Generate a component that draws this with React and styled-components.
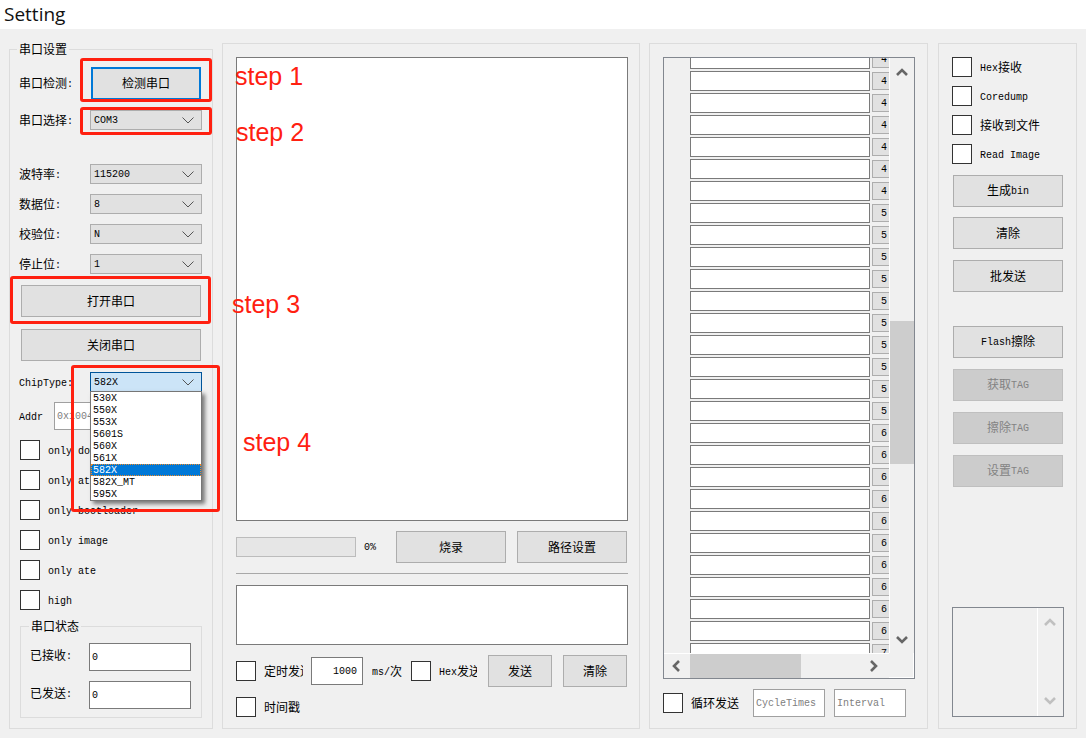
import React from 'react';
import styled, { createGlobalStyle } from 'styled-components';

const GlobalStyle = createGlobalStyle`
  html, body { margin: 0; padding: 0; background: #f0f0f0; overflow: hidden; }
  body {
    font-family: "Noto Sans CJK SC", "Liberation Sans", sans-serif;
    font-size: 12px;
    color: #000;
  }
  * { box-sizing: border-box; }
`;

const Window = styled.div`
  position: relative;
  width: 1086px;
  height: 738px;
  background: #f0f0f0;
  overflow: hidden;
`;

const TitleBar = styled.div`
  height: 29px;
  padding-left: 4px;
  background: #fff;
  font-family: "Open Sans", "Liberation Sans", sans-serif;
  font-size: 19px;
  line-height: 29px;
  color: #111;
`;

const Main = styled.div`
  display: flex;
  padding: 14px 0 0 9px;
`;

const Panel = styled.section`
  display: flex;
  flex-direction: column;
  align-items: flex-start;
  flex: none;
  width: ${(p) => p.$w}px;
  height: 686px;
  margin-right: ${(p) => p.$gap || 0}px;
  padding: 13px 0 0 13px;
  border: 1px solid #dcdcdc;
`;

const SerialGroup = styled.section`
  position: relative;
  display: flex;
  flex-direction: column;
  align-items: flex-start;
  flex: none;
  width: 204px;
  height: 680px;
  margin: 6px 9px 0 0;
  padding: 17px 0 0 10px;
  border: 1px solid #dcdcdc;
`;

const GroupTitle = styled.span`
  position: absolute;
  top: -9px;
  left: ${(p) => p.$left}px;
  padding: 0 2px 0 2px;
  background: #f0f0f0;
  line-height: 16px;
`;

const StatusGroup = styled.section`
  position: relative;
  width: 182px;
  height: 92px;
  margin-top: 16px;
  padding: 16px 0 0 10px;
  border: 1px solid #dcdcdc;
`;

const Latin = styled.span`
  font-family: "Liberation Mono", monospace;
  font-size: 10px;
  vertical-align: 1px;
`;

// SimSun look: ascii is narrow (6px a char), CJK is 12px
const T = ({ children }) =>
  String(children)
    .split(/([\x00-\x7f]+)/)
    .filter(Boolean)
    .map((s, i) => (/^[\x00-\x7f]/.test(s) ? <Latin key={i}>{s}</Latin> : s));

const Field = styled.div`
  display: flex;
  align-items: center;
  margin-top: ${(p) => p.$top || 0}px;
`;

const FieldLabel = styled.label`
  flex: none;
  width: ${(p) => (p.$w || 70) + 1}px;
  margin-left: -1px;
  padding-bottom: 2px;
  white-space: nowrap;
`;

const StatusLabel = styled(FieldLabel)`
  padding-bottom: 6px;
`;

const Button = styled.button`
  display: block;
  flex: none;
  width: ${(p) => p.$w || 110}px;
  height: 32px;
  margin: ${(p) => p.$top || 0}px 0 0 ${(p) => p.$left || 0}px;
  padding: 0;
  background: ${(p) => (p.disabled ? '#cccccc' : '#e1e1e1')};
  border: 1px solid ${(p) => (p.disabled ? '#bfbfbf' : '#adadad')};
  color: ${(p) => (p.disabled ? '#838383' : '#000')};
  font: inherit;
  line-height: 16px;
`;

const FocusButton = styled(Button)`
  height: 33px;
  margin-left: 1px;
  padding-bottom: 2px;
  border: 2px solid #0078d7;
`;

const ComboWrap = styled.div`
  position: relative;
  flex: none;
  width: 112px;
  height: 20px;
`;

const Combo = styled.div`
  display: flex;
  align-items: center;
  justify-content: space-between;
  height: 20px;
  padding: 0 7px 0 3px;
  background: ${(p) => (p.$open ? '#cce4f7' : '#e1e1e1')};
  border: 1px solid ${(p) => (p.$open ? '#005499' : '#adadad')};
  font-family: "Liberation Mono", monospace;
  font-size: 10px;
`;

const ComboList = styled.ul`
  position: absolute;
  top: 19px;
  left: 0;
  z-index: 2;
  width: 112px;
  margin: 0;
  padding: 0;
  list-style: none;
  background: #fff;
  border: 1px solid #767676;
  box-shadow: 3px 3px 4px rgba(0, 0, 0, 0.5);
  font-family: "Liberation Mono", monospace;
  font-size: 10px;
`;

const ComboItem = styled.li`
  height: 12px;
  padding-left: 2px;
  line-height: 14px;
  background: ${(p) => (p.$active ? '#0078d7' : 'transparent')};
  color: ${(p) => (p.$active ? '#fff' : '#000')};
  outline: ${(p) => (p.$active ? '1px dotted #f08a24' : 'none')};
  outline-offset: -1px;
`;

const Input = styled.div`
  flex: none;
  display: flex;
  align-items: center;
  justify-content: ${(p) => (p.$right ? 'flex-end' : 'flex-start')};
  width: ${(p) => p.$w}px;
  height: 28px;
  padding: 0 ${(p) => (p.$right ? 5 : 2)}px 0 2px;
  background: #fff;
  border: 1px solid ${(p) => (p.$hint ? '#a0a0a0' : '#7a7a7a')};
  color: ${(p) => (p.$hint ? '#808080' : '#000')};
  font-family: "Liberation Mono", monospace;
  font-size: 10px;
  white-space: nowrap;
  overflow: hidden;
`;

const Check = styled.span`
  flex: none;
  display: block;
  width: 20px;
  height: 20px;
  background: #fff;
  border: 1px solid #333;
`;

const CheckRow = styled.div`
  display: flex;
  align-items: center;
  gap: 8px;
  height: 20px;
  margin-top: ${(p) => p.$top ?? 10}px;
  white-space: nowrap;
`;

const CheckText = styled.span`
  padding-bottom: 2px;
`;

const ClipLabel = styled.span`
  flex: none;
  width: ${(p) => p.$w}px;
  padding-bottom: 2px;
  overflow: hidden;
  white-space: nowrap;
`;

const TextBox = styled.div`
  flex: none;
  width: 392px;
  height: ${(p) => p.$h}px;
  background: #fff;
  border: 1px solid #7a7a7a;
`;

const BurnRow = styled.div`
  display: flex;
  align-items: center;
  width: 392px;
  margin-top: 10px;
`;

const Progress = styled.div`
  width: 120px;
  height: 20px;
  background: #e6e6e6;
  border: 1px solid #bcbcbc;
`;

const Percent = styled.span`
  width: 40px;
  padding-left: 8px;
  font-family: "Liberation Mono", monospace;
  font-size: 10px;
`;

const Separator = styled.hr`
  flex: none;
  width: 392px;
  height: 1px;
  margin: 10px 0 11px;
  border: 0;
  background: #a8a8a8;
`;

const SendRow = styled.div`
  display: flex;
  align-items: center;
  height: 32px;
  margin-top: 10px;
`;

const Gap = styled.span`
  flex: none;
  width: ${(p) => p.$w}px;
`;

const ScrollBox = styled.div`
  display: grid;
  grid-template-columns: 225px 25px;
  grid-template-rows: 595px 25px;
  flex: none;
  width: 252px;
  height: 622px;
  border: 1px solid #82878f;
`;

const Viewport = styled.div`
  overflow: hidden;
  background: #f0f0f0;
`;

const RowStack = styled.div`
  display: flex;
  flex-direction: column;
  gap: 2px;
  margin-top: -9px;
  padding-left: 26px;
`;

const ListRow = styled.div`
  display: flex;
  align-items: center;
  gap: 2px;
  height: 20px;
`;

const RowInput = styled.div`
  flex: none;
  width: 180px;
  height: 20px;
  background: #fff;
  border: 1px solid #7a7a7a;
`;

const RowButton = styled.div`
  flex: none;
  width: 40px;
  height: 18px;
  padding-left: 8px;
  background: #e1e1e1;
  border: 1px solid #adadad;
  font-family: "Liberation Mono", monospace;
  font-size: 10px;
  line-height: 17px;
`;

const VBar = styled.div`
  display: flex;
  flex-direction: column;
  align-items: center;
  background: #f0f0f0;
  border-left: 1px solid #fff;
`;

const ArrowSlot = styled.div`
  flex: none;
  display: flex;
  align-items: center;
  justify-content: center;
  width: ${(p) => p.$w || 24}px;
  height: ${(p) => p.$h || 25}px;
  margin-top: ${(p) => (p.$end ? 'auto' : 0)};
  margin-left: ${(p) => (p.$push ? 'auto' : 0)};
`;

const VThumb = styled.div`
  flex: none;
  width: 24px;
  height: 143px;
  margin-top: 233px;
  background: #cdcdcd;
`;

const HBar = styled.div`
  display: flex;
  background: #f0f0f0;
  border-top: 1px solid #fff;
`;

const HThumb = styled.div`
  flex: none;
  width: 111px;
  height: 24px;
  background: #cdcdcd;
`;

const Corner = styled.div`
  background: #f0f0f0;
  border-right: 1px solid #fff;
  border-bottom: 1px solid #fff;
`;

const LoopRow = styled.div`
  display: flex;
  align-items: center;
  margin-top: 10px;
`;

const LogBox = styled.div`
  display: flex;
  justify-content: flex-end;
  flex: none;
  width: 112px;
  height: 110px;
  margin-top: auto;
  margin-bottom: 11px;
  border: 1px solid #82878f;
`;

const LogBar = styled.div`
  display: flex;
  flex-direction: column;
  width: 26px;
  border-left: 1px solid #fff;
`;

const Note = styled.div`
  position: absolute;
  z-index: 3;
  left: ${(p) => p.$x}px;
  top: ${(p) => p.$y}px;
  width: ${(p) => p.$w}px;
  height: ${(p) => p.$h}px;
  border: 3px solid #ff2010;
  border-radius: 3px;
`;

const Step = styled.span`
  position: absolute;
  z-index: 3;
  left: ${(p) => p.$x}px;
  top: ${(p) => p.$y}px;
  font-family: "Liberation Sans", Arial, sans-serif;
  font-size: 25px;
  line-height: 30px;
  color: #ff2010;
`;

const Chevron = ({ dir = 'down', color = '#666' }) => {
  const points = {
    up: '1,8 6,3 11,8',
    down: '1,3 6,8 11,3',
    left: '8,1 3,6 8,11',
    right: '3,1 8,6 3,11',
  }[dir];
  return (
    <svg width="12" height="12" viewBox="0 0 12 12">
      <polyline points={points} fill="none" stroke={color} strokeWidth="2.6" />
    </svg>
  );
};

const ComboArrow = () => (
  <svg width="12" height="7" viewBox="0 0 12 7">
    <polyline points="0.5,0.5 6,6 11.5,0.5" fill="none" stroke="#555" strokeWidth="1" />
  </svg>
);

const chipTypes = ['530X', '550X', '553X', '5601S', '560X', '561X', '582X', '582X_MT', '595X'];

const rowDigits = [
  ...Array(7).fill(4),
  ...Array(10).fill(5),
  ...Array(10).fill(6),
  7,
];

function SelectField({ label, value, top }) {
  return (
    <Field $top={top}>
      <FieldLabel><T>{label}</T></FieldLabel>
      <ComboWrap>
        <Combo>{value}<ComboArrow /></Combo>
      </ComboWrap>
    </Field>
  );
}

function CheckField({ label, top }) {
  return (
    <CheckRow $top={top}>
      <Check />
      <CheckText><T>{label}</T></CheckText>
    </CheckRow>
  );
}

function SerialPanel() {
  return (
    <SerialGroup>
      <GroupTitle $left={7}>串口设置</GroupTitle>
      <Field>
        <FieldLabel><T>串口检测:</T></FieldLabel>
        <FocusButton>检测串口</FocusButton>
      </Field>
      <SelectField label="串口选择:" value="COM3" top={10} />
      <SelectField label="波特率:" value="115200" top={34} />
      <SelectField label="数据位:" value="8" top={10} />
      <SelectField label="校验位:" value="N" top={10} />
      <SelectField label="停止位:" value="1" top={10} />
      <Button $w={180} $left={1} $top={11}>打开串口</Button>
      <Button $w={180} $left={1} $top={12}>关闭串口</Button>
      <Field $top={11}>
        <FieldLabel><T>ChipType:</T></FieldLabel>
        <ComboWrap>
          <Combo $open>582X<ComboArrow /></Combo>
          <ComboList>
            {chipTypes.map((c) => (
              <ComboItem key={c} $active={c === '582X'}>{c}</ComboItem>
            ))}
          </ComboList>
        </ComboWrap>
      </Field>
      <Field $top={10}>
        <FieldLabel $w={34}><T>Addr</T></FieldLabel>
        <Input $w={148} $hint>0x1004</Input>
      </Field>
      <CheckField label="only download" />
      <CheckField label="only ate" />
      <CheckField label="only bootloader" />
      <CheckField label="only image" />
      <CheckField label="only ate" />
      <CheckField label="high" />
      <StatusGroup>
        <GroupTitle $left={8}>串口状态</GroupTitle>
        <Field>
          <StatusLabel $w={58}><T>已接收:</T></StatusLabel>
          <Input $w={102}>0</Input>
        </Field>
        <Field $top={10}>
          <StatusLabel $w={58}><T>已发送:</T></StatusLabel>
          <Input $w={102}>0</Input>
        </Field>
      </StatusGroup>
    </SerialGroup>
  );
}

function ConsolePanel() {
  return (
    <Panel $w={418} $gap={9}>
      <TextBox $h={464} />
      <BurnRow>
        <Progress />
        <Percent>0%</Percent>
        <Button>烧录</Button>
        <Button $left={11}>路径设置</Button>
      </BurnRow>
      <Separator />
      <TextBox $h={60} />
      <SendRow>
        <Check />
        <Gap $w={8} />
        <ClipLabel $w={39}>定时发送</ClipLabel>
        <Gap $w={8} />
        <Input $w={52} $right>1000</Input>
        <Gap $w={9} />
        <ClipLabel $w={39}><T>ms/次</T></ClipLabel>
        <Check />
        <Gap $w={8} />
        <ClipLabel $w={38}><T>Hex发送</T></ClipLabel>
        <Gap $w={11} />
        <Button $w={64}>发送</Button>
        <Button $w={64} $left={11}>清除</Button>
      </SendRow>
      <CheckField label="时间戳" top={10} />
    </Panel>
  );
}

function ListPanel() {
  return (
    <Panel $w={279} $gap={10}>
      <ScrollBox>
        <Viewport>
          <RowStack>
            {rowDigits.map((d, i) => (
              <ListRow key={i}>
                <RowInput />
                <RowButton>{d}</RowButton>
              </ListRow>
            ))}
          </RowStack>
        </Viewport>
        <VBar>
          <ArrowSlot $h={30}><Chevron dir="up" /></ArrowSlot>
          <VThumb />
          <ArrowSlot $h={26} $end><Chevron dir="down" /></ArrowSlot>
        </VBar>
        <HBar>
          <ArrowSlot $w={26} $h={24}><Chevron dir="left" /></ArrowSlot>
          <HThumb />
          <ArrowSlot $w={30} $h={24} $push><Chevron dir="right" /></ArrowSlot>
        </HBar>
        <Corner />
      </ScrollBox>
      <LoopRow>
        <Check />
        <Gap $w={8} />
        <ClipLabel $w={62}>循环发送</ClipLabel>
        <Input $w={72} $hint>CycleTimes</Input>
        <Gap $w={9} />
        <Input $w={72} $hint>Interval</Input>
      </LoopRow>
    </Panel>
  );
}

function ActionPanel() {
  return (
    <Panel $w={139}>
      <CheckField label="Hex接收" top={0} />
      <CheckField label="Coredump" top={9} />
      <CheckField label="接收到文件" top={9} />
      <CheckField label="Read Image" top={9} />
      <Button $left={1} $top={11}><T>生成bin</T></Button>
      <Button $left={1} $top={10}>清除</Button>
      <Button $left={1} $top={11}>批发送</Button>
      <Button $left={1} $top={34}><T>Flash擦除</T></Button>
      <Button $left={1} $top={11} disabled><T>获取TAG</T></Button>
      <Button $left={1} $top={11} disabled><T>擦除TAG</T></Button>
      <Button $left={1} $top={11} disabled><T>设置TAG</T></Button>
      <LogBox>
        <LogBar>
          <ArrowSlot $h={30}><Chevron dir="up" color="#c0c0c0" /></ArrowSlot>
          <ArrowSlot $h={30} $end><Chevron dir="down" color="#c0c0c0" /></ArrowSlot>
        </LogBar>
      </LogBox>
    </Panel>
  );
}

export default function App() {
  return (
    <Window>
      <GlobalStyle />
      <TitleBar>Setting</TitleBar>
      <Main>
        <SerialPanel />
        <ConsolePanel />
        <ListPanel />
        <ActionPanel />
      </Main>
      <Note $x={80} $y={58} $w={132} $h={44} />
      <Note $x={80} $y={107} $w={132} $h={28} />
      <Note $x={10} $y={276} $w={201} $h={48} />
      <Note $x={71} $y={365} $w={149} $h={147} />
      <Step $x={235} $y={61}>step 1</Step>
      <Step $x={236} $y={117}>step 2</Step>
      <Step $x={232} $y={289}>step 3</Step>
      <Step $x={243} $y={427}>step 4</Step>
    </Window>
  );
}
